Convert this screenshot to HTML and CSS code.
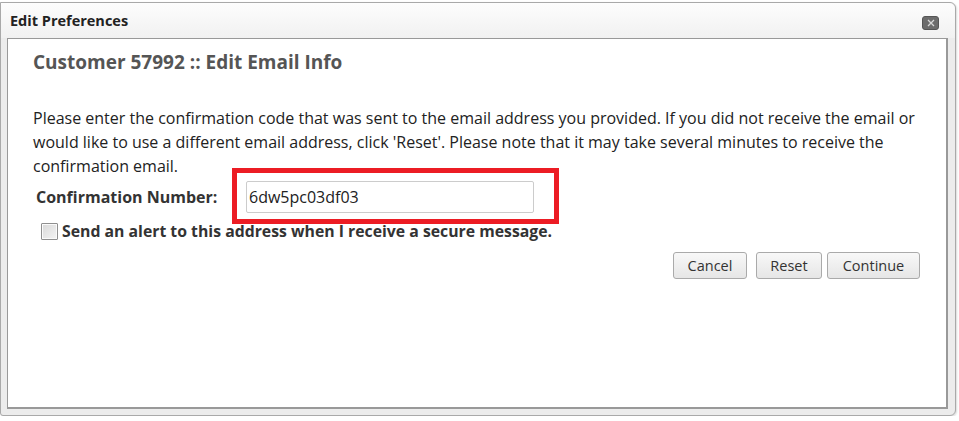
FILE: index.html
```html
<!DOCTYPE html>
<html lang="en">
<head>
    <meta charset="UTF-8">
    <title>Edit Preferences</title>
    <link rel="stylesheet" href="styles.css">
</head>
<body>

<div class="dialog">
    <div class="dialog-title">
        <span>Edit Preferences</span>
        <button class="close-btn" title="Close">
            <svg width="8" height="8" viewBox="0 0 8 8"><path d="M1 1L7 7M7 1L1 7" stroke="#d8d8d8" stroke-width="1.3"/></svg>
        </button>
    </div>

    <div class="dialog-body">
        <h3>Customer 57992 :: Edit Email Info</h3>

        <p class="intro">Please enter the confirmation code that was sent to the email address you provided. If you did not receive the email or would like to use a different email address, click 'Reset'. Please note that it may take several minutes to receive the confirmation email.</p>

        <div class="field-row">
            <label for="confirm-code">Confirmation Number:</label>
            <div class="highlight">
                <input id="confirm-code" type="text" value="6dw5pc03df03">
            </div>
        </div>

        <div class="check-row">
            <input id="send-alert" type="checkbox">
            <label for="send-alert">Send an alert to this address when I receive a secure message.</label>
        </div>

        <div class="actions">
            <button class="btn btn-cancel">Cancel</button>
            <button class="btn btn-reset">Reset</button>
            <button class="btn btn-continue">Continue</button>
        </div>
    </div>
</div>

</body>
</html>
```

FILE: styles.css
```css
body {
    font-family: "Open Sans", Arial, sans-serif;
    background-color: #fff;
    margin: 0;
    padding: 0;
}

.dialog {
    width: 954px;
    height: 412px;
    margin-top: 2px;
    border: 1px solid #a9a9a9;
    border-radius: 0 6px 6px 3px;
    background-color: #ececec;
    box-shadow: 1px 1px 2px rgba(0, 0, 0, 0.15);
    display: flex;
    flex-direction: column;
}

.dialog-title {
    height: 35px;
    padding: 0 16px 0 9px;
    display: flex;
    align-items: center;
    justify-content: space-between;
    background: linear-gradient(#fdfdfd, #f1f1f1);
    border-radius: 0 6px 0 0;
    font-size: 14.5px;
    font-weight: bold;
    color: #222;
}

.close-btn {
    width: 17px;
    height: 14px;
    margin-top: 4px;
    padding: 0;
    border: 1px solid #555;
    border-radius: 3px;
    background-color: #6c6c6c;
    display: flex;
    align-items: center;
    justify-content: center;
    cursor: pointer;
}

.dialog-body {
    flex: 1;
    margin: 0 7px 6px 6px;
    padding: 11px 25px 0 25px;
    background-color: #fff;
    border: 1px solid #999;
    border-right-width: 2px;
    border-bottom-width: 2px;
}

h3 {
    margin: 0;
    font-size: 19px;
    line-height: 24px;
    color: #555;
}

.intro {
    margin: 32px 0 0 0;
    width: 895px;
    font-size: 16px;
    line-height: 24px;
    color: #222;
}

.field-row {
    display: flex;
    align-items: center;
    margin-top: 3px;
}

.field-row label {
    width: 210px;
    padding-left: 3px;
    font-size: 16px;
    font-weight: bold;
    color: #333;
}

/* red annotation box drawn around the input */
.highlight {
    position: relative;
}

.highlight::after {
    content: "";
    position: absolute;
    top: -13px;
    left: -14px;
    right: -25px;
    bottom: -11px;
    border: 5px solid #ec1c24;
    pointer-events: none;
}

.highlight input {
    box-sizing: border-box;
    width: 288px;
    height: 32px;
    margin: 0;
    padding: 0 2px;
    border: 1px solid #ccc;
    border-radius: 2px;
    font-family: "Open Sans", Arial, sans-serif;
    font-size: 16px;
    color: #222;
}

.check-row {
    display: flex;
    align-items: center;
    margin: 8px 0 0 8px;
    height: 20px;
}

.check-row input {
    -webkit-appearance: none;
    appearance: none;
    box-sizing: border-box;
    width: 17px;
    height: 17px;
    margin: 0 4px 0 0;
    border: 1px solid #8f8f8f;
    border-radius: 1px;
    background: linear-gradient(135deg, #d8d8d8, #f4f4f4);
    box-shadow: inset 0 0 0 1px #fafafa;
}

.check-row label {
    font-size: 15.8px;
    font-weight: bold;
    color: #333;
}

.actions {
    display: flex;
    justify-content: flex-end;
    margin: 11px 1px 0 0;
}

.btn {
    height: 27px;
    padding: 0;
    font-family: "Open Sans", Arial, sans-serif;
    font-size: 14.5px;
    color: #333;
    background: linear-gradient(#f8f8f8, #e6e6e6);
    border: 1px solid #aaa;
    border-radius: 3px;
    cursor: pointer;
}

.btn:hover {
    background: linear-gradient(#fff, #ececec);
}

.btn-cancel {
    width: 74px;
}

.btn-reset {
    width: 66px;
    margin-left: 9px;
}

.btn-continue {
    width: 93px;
    margin-left: 5px;
}
```
